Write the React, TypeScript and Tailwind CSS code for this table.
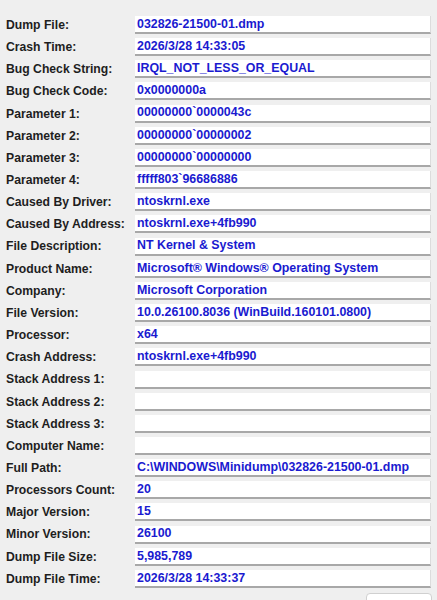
import React from "react";

const rows: [string, string][] = [
  ["Dump File:", "032826-21500-01.dmp"],
  ["Crash Time:", "2026/3/28 14:33:05"],
  ["Bug Check String:", "IRQL_NOT_LESS_OR_EQUAL"],
  ["Bug Check Code:", "0x0000000a"],
  ["Parameter 1:", "00000000`0000043c"],
  ["Parameter 2:", "00000000`00000002"],
  ["Parameter 3:", "00000000`00000000"],
  ["Parameter 4:", "fffff803`96686886"],
  ["Caused By Driver:", "ntoskrnl.exe"],
  ["Caused By Address:", "ntoskrnl.exe+4fb990"],
  ["File Description:", "NT Kernel & System"],
  ["Product Name:", "Microsoft® Windows® Operating System"],
  ["Company:", "Microsoft Corporation"],
  ["File Version:", "10.0.26100.8036 (WinBuild.160101.0800)"],
  ["Processor:", "x64"],
  ["Crash Address:", "ntoskrnl.exe+4fb990"],
  ["Stack Address 1:", ""],
  ["Stack Address 2:", ""],
  ["Stack Address 3:", ""],
  ["Computer Name:", ""],
  ["Full Path:", "C:\\WINDOWS\\Minidump\\032826-21500-01.dmp"],
  ["Processors Count:", "20"],
  ["Major Version:", "15"],
  ["Minor Version:", "26100"],
  ["Dump File Size:", "5,985,789"],
  ["Dump File Time:", "2026/3/28 14:33:37"],
];

export default function App() {
  return (
    <div
      className="w-[437px] h-[600px] overflow-hidden bg-[#efefef] relative"
      style={{ fontFamily: '"Liberation Sans", Arial, sans-serif' }}
    >
      <div className="flex flex-col gap-[4.16px] pt-[16px] pl-[6px] pr-[6px]">
        {rows.map(([label, value]) => (
          <div key={label} className="flex items-center h-[18px]">
            <div className="w-[129px] shrink-0 text-[12.2px] font-bold text-[#1e1e1e] leading-none whitespace-nowrap">
              {label}
            </div>
            <div className="flex-1 h-[18px] bg-white border-b-[2px] border-b-[#a8a8a8] border-r border-r-[#dcdcdc] flex items-center pl-[2px] overflow-hidden">
              <span className="text-[12.4px] font-bold text-[#1a1ad0] leading-none whitespace-nowrap">
                {value}
              </span>
            </div>
          </div>
        ))}
      </div>
      <div className="absolute left-[366px] top-[593px] w-[66px] h-[24px] bg-white border border-[#d0d0d0] rounded-[4px]" />
    </div>
  );
}
